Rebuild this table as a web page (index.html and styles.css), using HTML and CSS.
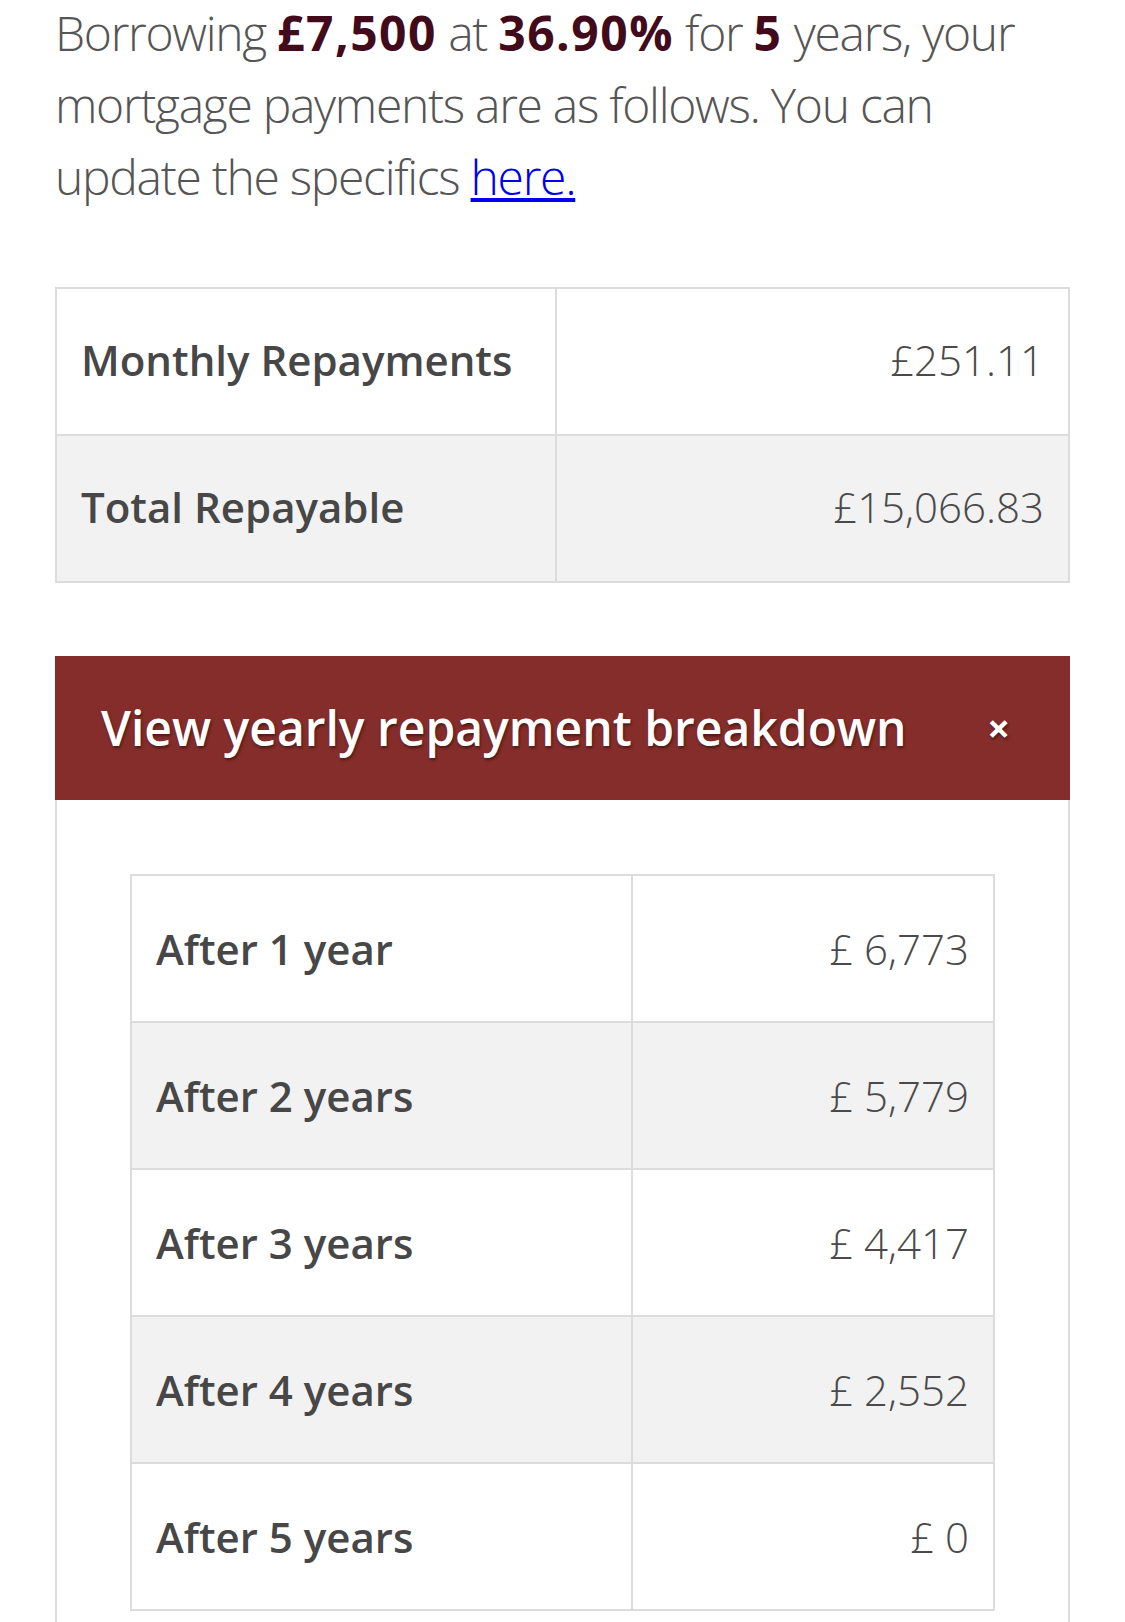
FILE: index.html
```html
<!DOCTYPE html>
<html lang="en">

<head>
    <meta charset="UTF-8">
    <meta name="viewport" content="width=device-width, initial-scale=1.0">
    <title>Repayment Summary</title>
    <link rel="stylesheet" href="styles.css">
</head>

<body>
    <div class="page">
        <p class="intro">
            Borrowing <strong>£7,500</strong> at <strong>36.90%</strong> for <strong>5</strong> years, your
            mortgage payments are as follows. You can update the specifics <a href="#">here.</a>
        </p>

        <table class="summary-table">
            <tr>
                <th>Monthly Repayments</th>
                <td>£251.11</td>
            </tr>
            <tr>
                <th>Total Repayable</th>
                <td>£15,066.83</td>
            </tr>
        </table>

        <div class="breakdown">
            <div class="breakdown-header">
                <h3>View yearly repayment breakdown</h3>
                <span class="close">×</span>
            </div>
            <div class="breakdown-body">
                <table class="summary-table yearly-table">
                    <tr>
                        <th>After 1 year</th>
                        <td>£ 6,773</td>
                    </tr>
                    <tr>
                        <th>After 2 years</th>
                        <td>£ 5,779</td>
                    </tr>
                    <tr>
                        <th>After 3 years</th>
                        <td>£ 4,417</td>
                    </tr>
                    <tr>
                        <th>After 4 years</th>
                        <td>£ 2,552</td>
                    </tr>
                    <tr>
                        <th>After 5 years</th>
                        <td>£ 0</td>
                    </tr>
                </table>
            </div>
        </div>
    </div>
</body>

</html>
```
FILE: styles.css
```css
* {
    padding: 0;
    margin: 0;
    box-sizing: border-box;
}

body {
    font-family: "Open Sans", "Noto Sans", sans-serif;
    background-color: #fff;
    color: #4a4a4a;
    margin: 0;
}

.page {
    padding: 0 55px;
}

.intro {
    margin-top: -3px;
    font-size: 48px;
    line-height: 72px;
    font-weight: 300;
    letter-spacing: -1.3px;
    color: #555;
}

.intro strong {
    font-weight: 700;
    letter-spacing: 1.5px;
    color: #410b1c;
}

.intro a {
    color: #0000ee;
    text-decoration: underline;
}

.summary-table {
    width: 100%;
    margin-top: 74px;
    border-collapse: collapse;
    border: 2px solid #dcdcdc;
    font-size: 42px;
    line-height: 63px;
}

.summary-table th,
.summary-table td {
    padding: 39px 24px 43px;
    border: 2px solid #dcdcdc;
}

.summary-table th {
    width: 49.4%;
    text-align: left;
    font-weight: 600;
    color: #474747;
}

.summary-table td {
    text-align: right;
    font-weight: 300;
    color: #4a4a4a;
}

.summary-table tr:nth-child(even) {
    background-color: #f2f2f2;
}

.breakdown {
    margin-top: 73px;
}

.breakdown-header {
    display: flex;
    justify-content: space-between;
    align-items: center;
    padding: 36px 60px 36px 46px;
    background-color: #852d2a;
    color: #fff;
}

.breakdown-header h3 {
    font-size: 48px;
    line-height: 72px;
    font-weight: 600;
    text-shadow: 1px 2px 3px rgba(0, 0, 0, 0.45);
}

.breakdown-header .close {
    font-size: 40px;
    font-weight: 700;
    line-height: 1;
    text-shadow: 1px 2px 3px rgba(0, 0, 0, 0.45);
}

.breakdown-body {
    border: 2px solid #dcdcdc;
    border-top: none;
    padding: 74px 73px 40px;
}

.yearly-table {
    margin-top: 0;
}

.yearly-table th,
.yearly-table td {
    padding: 41px 24px;
}

.yearly-table th {
    width: 58%;
}
```
